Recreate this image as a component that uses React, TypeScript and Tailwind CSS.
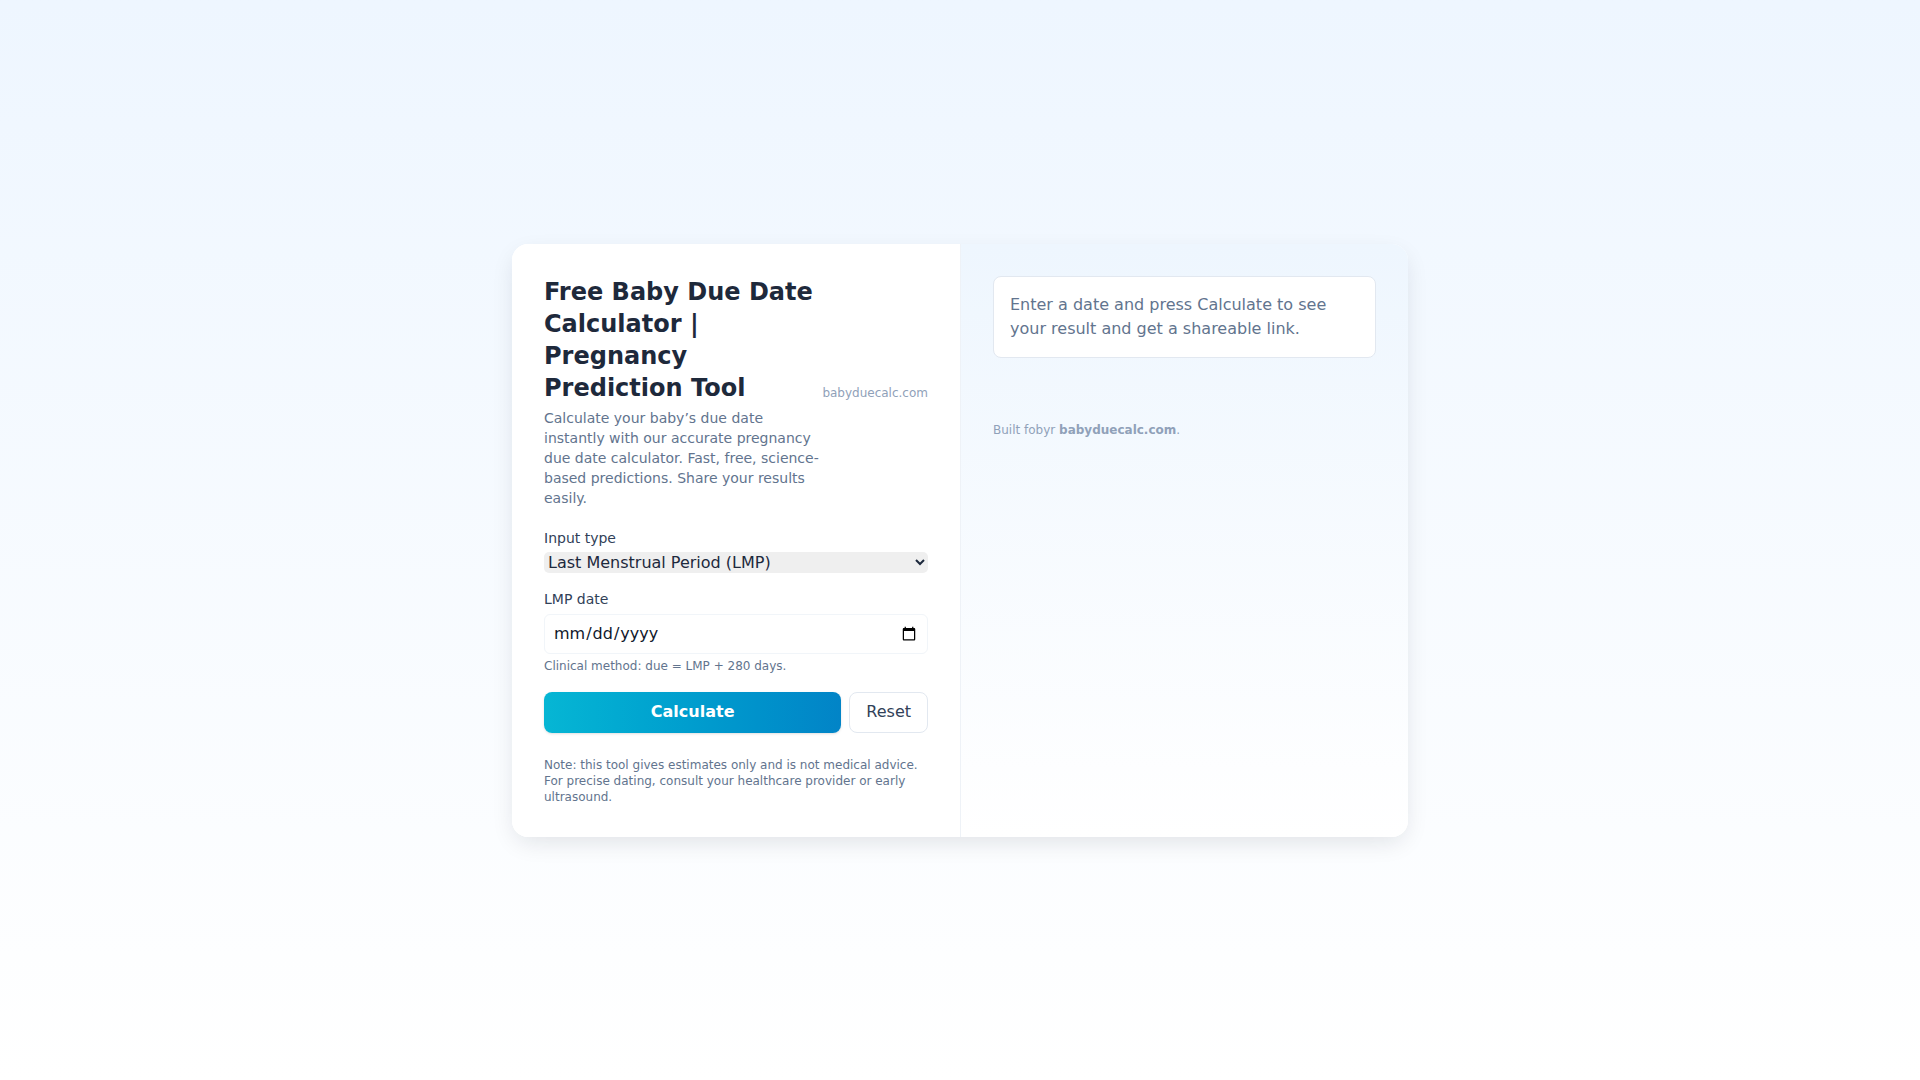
import React from "react";

export default function App() {
  return (
    <div className="min-h-screen w-full flex items-center justify-center bg-linear-to-b from-[#eef6ff] to-white font-['DejaVu_Sans',sans-serif]">
      <div className="w-[896px] grid grid-cols-2 rounded-2xl bg-white shadow-[0_8px_24px_-4px_rgba(15,23,42,0.12)] overflow-hidden">
        <section className="p-8 bg-white">
          <div className="grid grid-cols-[1fr_auto]">
            <h1 className="text-2xl leading-8 font-bold text-[#1e293b]">
              Free Baby Due Date Calculator | Pregnancy Prediction Tool
            </h1>
            <span className="self-end justify-self-end mb-[3px] text-xs leading-4 text-slate-400">
              babyduecalc.com
            </span>
            <p className="mt-1 text-sm leading-5 text-slate-500">
              Calculate your baby’s due date instantly with our accurate pregnancy due date
              calculator. Fast, free, science-based predictions. Share your results easily.
            </p>
          </div>

          <div className="mt-5">
            <label className="block text-sm leading-5 text-slate-700">Input type</label>
            <select className="mt-1 block w-full h-[21px] rounded-[5px] bg-[#efefef] text-base text-slate-800">
              <option>Last Menstrual Period (LMP)</option>
              <option>Conception date</option>
              <option>Ultrasound</option>
            </select>
          </div>

          <div className="mt-4">
            <label className="block text-sm leading-5 text-slate-700">LMP date</label>
            <input
              type="date"
              className="mt-[5px] block w-full h-10 rounded-md border border-[#f1f5f9] bg-white px-2 text-base text-slate-900"
            />
            <p className="mt-1 text-xs leading-4 text-slate-500">
              Clinical method: due = LMP + 280 days.
            </p>
          </div>

          <div className="mt-[18px] flex gap-2">
            <button className="flex-1 h-[41px] rounded-lg bg-linear-to-r from-[#06b6d4] to-[#0284c7] text-base font-bold text-white shadow-sm">
              Calculate
            </button>
            <button className="h-[41px] rounded-lg border border-slate-200 bg-white px-4 text-base text-slate-700">
              Reset
            </button>
          </div>

          <p className="mt-6 text-xs leading-4 text-slate-500">
            Note: this tool gives estimates only and is not medical advice. For precise dating,
            consult your healthcare provider or early ultrasound.
          </p>
        </section>

        <aside className="p-8 border-l border-[#eef2f7] bg-linear-to-b from-[#eef6fe] to-white">
          <div className="rounded-lg border border-slate-200 bg-white p-4 text-base leading-6 text-slate-500">
            Enter a date and press Calculate to see your result and get a shareable link.
          </div>
          <p className="mt-16 text-xs leading-4 text-slate-400">
            Built fobyr <span className="font-bold">babyduecalc.com</span>.
          </p>
        </aside>
      </div>
    </div>
  );
}
